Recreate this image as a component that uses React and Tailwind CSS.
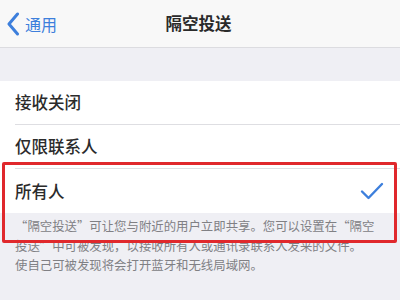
export default function App() {
  const rows = ['接收关闭', '仅限联系人', '所有人'];

  return (
    <div
      className="relative h-[300px] w-[400px] overflow-hidden bg-[#efeff4] text-[#1c1c1e]"
      style={{ fontFamily: '"Noto Sans CJK SC", "Noto Sans", sans-serif' }}
    >
      {/* nav bar */}
      <div className="relative flex h-[48px] items-center justify-center border-b border-[#dcdce0] bg-[#f8f8f8]">
        <div className="absolute left-[6px] top-0 flex h-full items-center gap-[5px] text-[16px] text-[#3d7fdc]">
          <svg width="14" height="24" viewBox="0 0 14 24" className="mt-[1px]">
            <path d="M11.5 2 L3 12 L11.5 22" fill="none" stroke="#3d7fdc" strokeWidth="3" strokeLinecap="round" strokeLinejoin="round" />
          </svg>
          <span>通用</span>
        </div>
        <span className="ml-[-3px] text-[16.5px] font-bold text-[#2a2a2a]">隔空投送</span>
      </div>

      {/* options group */}
      <div className="mt-[33px] bg-white">
        {rows.map((label, i) => (
          <div key={label} className="flex h-[44px] items-center pl-[15px]">
            <div
              className={
                'flex h-full flex-1 items-center pr-[16px] ' +
                (i < rows.length - 1 ? 'border-b border-[#dedee2]' : '')
              }
            >
              <span className="flex-1 text-[16.5px] font-medium text-[#2b2b2b]">{label}</span>
              {i === 2 && (
                <svg width="24" height="18" viewBox="0 0 24 18">
                  <path d="M2 9.5 L8.5 16 L22 2" fill="none" stroke="#3d7fdc" strokeWidth="2.4" strokeLinecap="round" strokeLinejoin="round" />
                </svg>
              )}
            </div>
          </div>
        ))}
      </div>

      {/* footer */}
      <div className="px-[15px] pt-[4px] text-[12.4px] leading-[19.5px] text-[#808084]">
        <div>“隔空投送”可让您与附近的用户立即共享。您可以设置在“隔空</div>
        <div>投送”中可被发现，以接收所有人或通讯录联系人发来的文件。</div>
        <div>使自己可被发现将会打开蓝牙和无线局域网。</div>
      </div>

      {/* annotation box */}
      <div className="absolute left-[2px] top-[162px] h-[81px] w-[395px] rounded-[2px] border-[3px] border-[#e0282c]" />
    </div>
  );
}
